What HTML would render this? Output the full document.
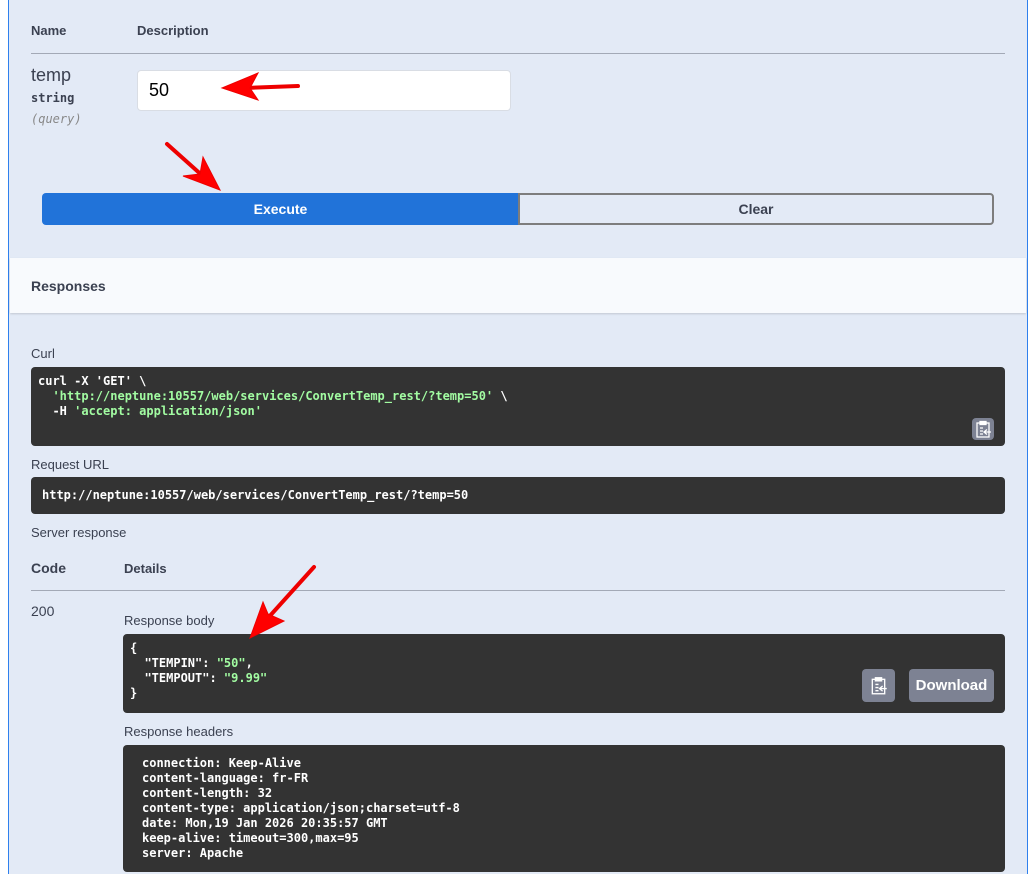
<!DOCTYPE html>
<html><head><meta charset="utf-8"><style>
*{margin:0;padding:0;box-sizing:border-box}
body{width:1031px;height:874px;background:#fff;position:relative;overflow:hidden;font-family:"Liberation Sans",sans-serif;color:#3b4151}
.panel{position:absolute;left:8px;top:0;width:1020px;height:874px;background:#e3eaf6;border-left:1.5px solid #2f80ed;border-right:1.5px solid #2f80ed}
.a{position:absolute}
.b{font-weight:bold;font-size:14px}
.code{position:absolute;background:#333;border-radius:4px;color:#fff;font-family:"DejaVu Sans Mono","Liberation Mono",monospace;font-weight:bold;font-size:12px;line-height:15px;white-space:pre}
.g{color:#a2fca2}
.cp{position:absolute;background:#7d8293;border-radius:4px}
</style></head><body>
<div class="panel"></div>
<div class="a b" style="left:31px;top:23px;font-size:13px">Name</div>
<div class="a b" style="left:137px;top:23px;font-size:13px">Description</div>
<div class="a" style="left:31px;top:53px;width:974px;height:1px;background:#a3a9b6"></div>
<div class="a" style="left:31px;top:65px;font-size:18px">temp</div>
<div class="a" style="left:31px;top:91px;font-family:'DejaVu Sans Mono',monospace;font-size:12px;font-weight:bold">string</div>
<div class="a" style="left:31px;top:112px;font-family:'DejaVu Sans Mono',monospace;font-size:12px;font-style:italic;color:#888">(query)</div>
<div class="a" style="left:137px;top:70px;width:374px;height:41px;background:#fff;border:1px solid #d9dde4;border-radius:4px;font-size:18px;padding:9px 11px;color:#000">50</div>
<div class="a" style="left:42px;top:193px;width:477px;height:32px;background:#2173d9;border-radius:4px 0 0 4px;color:#fff;font-weight:bold;font-size:14px;text-align:center;line-height:32px">Execute</div>
<div class="a" style="left:518px;top:193px;width:476px;height:32px;border:2px solid #7d7d7d;border-radius:0 4px 4px 0;font-weight:bold;font-size:14px;text-align:center;line-height:28px">Clear</div>
<div class="a" style="left:10px;top:258px;width:1016px;height:55px;background:#f8fafd;box-shadow:0 1px 2px rgba(0,0,0,.15)"></div>
<div class="a b" style="left:31px;top:278px">Responses</div>
<div class="a" style="left:31px;top:346px;font-size:13px">Curl</div>
<div class="code" style="left:31px;top:367px;width:974px;height:79px;padding:7px 7px">curl -X 'GET' \
  <span class="g">'http://neptune:10557/web/services/ConvertTemp_rest/?temp=50'</span> \
  -H <span class="g">'accept: application/json'</span></div>
<div class="cp" style="left:972px;top:418px;width:22px;height:22px"><svg width="22" height="22" viewBox="0 0 22 22" fill="none" stroke="#fff" stroke-width="1.3"><rect x="5" y="5" width="12" height="14"/><rect x="8" y="3.5" width="6" height="3" fill="#fff"/><path d="M8 10h3M8 13h3M8 16h3M12 14h7M15 11.5l-3 2.5 3 2.5"/></svg></div>
<div class="a" style="left:31px;top:457px;font-size:13px">Request URL</div>
<div class="code" style="left:31px;top:477px;width:974px;height:37px;padding:11px 11px">http://neptune:10557/web/services/ConvertTemp_rest/?temp=50</div>
<div class="a" style="left:31px;top:525px;font-size:13px">Server response</div>
<div class="a b" style="left:31px;top:560px">Code</div>
<div class="a" style="left:124px;top:561px;font-size:13px;font-weight:bold">Details</div>
<div class="a" style="left:31px;top:590px;width:974px;height:1px;background:#a3a9b6"></div>
<div class="a" style="left:31px;top:603px;font-size:14px">200</div>
<div class="a" style="left:124px;top:613px;font-size:13px">Response body</div>
<div class="code" style="left:123px;top:634px;width:882px;height:79px;padding:7px 7px">{
  "TEMPIN": <span class="g">"50"</span>,
  "TEMPOUT": <span class="g">"9.99"</span>
}</div>
<div class="cp" style="left:862px;top:669px;width:33px;height:33px"><svg width="33" height="33" viewBox="-5 -5 32 32" fill="none" stroke="#fff" stroke-width="1.3"><rect x="5" y="5" width="12" height="14"/><rect x="8" y="3.5" width="6" height="3" fill="#fff"/><path d="M8 10h3M8 13h3M8 16h3M12 14h7M15 11.5l-3 2.5 3 2.5"/></svg></div>
<div class="cp" style="left:909px;top:669px;width:85px;height:33px;color:#fff;font-weight:bold;font-size:15px;text-align:center;line-height:33px">Download</div>
<div class="a" style="left:124px;top:724px;font-size:13px">Response headers</div>
<div class="code" style="left:123px;top:745px;width:882px;height:127px;padding:11px 19px">connection: Keep-Alive
content-language: fr-FR
content-length: 32
content-type: application/json;charset=utf-8
date: Mon,19 Jan 2026 20:35:57 GMT
keep-alive: timeout=300,max=95
server: Apache</div>
<svg class="a" style="left:0;top:0" width="1031" height="874">
<g fill="#f00" stroke="#e00" stroke-linecap="round">
<path d="M298 86 L245 88" stroke-width="4"/><path d="M222 88 L258 73 L250 88 L258 100Z"/>
<path d="M167 144 L205 178" stroke-width="4"/><path d="M220 190 L183 176 L200 174 L203 157Z"/>
<path d="M314 567 L268 618" stroke-width="4"/><path d="M250 638 L263 602 L268 614 L284 621Z"/>
</g></svg>
</body></html>
